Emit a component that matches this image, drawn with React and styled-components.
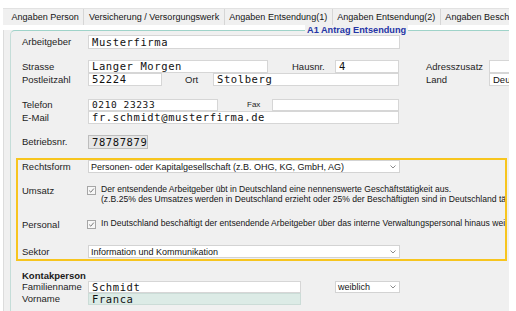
import styled, { createGlobalStyle } from "styled-components";

const GlobalStyle = createGlobalStyle`
  html, body {
    margin: 0;
    padding: 0;
    background: #ffffff;
    overflow: hidden;
  }
  * {
    box-sizing: border-box;
  }
`;

const tabs = [
  "Angaben Person",
  "Versicherung / Versorgungswerk",
  "Angaben Entsendung(1)",
  "Angaben Entsendung(2)",
  "Angaben Beschäftigung",
];

function Chevron() {
  return (
    <svg width="6" height="4" viewBox="0 0 6 4">
      <path d="M0.5 0.5 L3 3 L5.5 0.5" fill="none" stroke="#8a8a8a" strokeWidth="1" />
    </svg>
  );
}

function Check() {
  return (
    <CheckBox>
      <svg width="7" height="7" viewBox="0 0 7 7">
        <path d="M1.2 3.6 L2.8 5.2 L5.8 1.6" fill="none" stroke="#7a7a7a" strokeWidth="1" />
      </svg>
    </CheckBox>
  );
}

function App() {
  return (
    <Window>
      <GlobalStyle />
      <TabBar>
        {tabs.map((t) => (
          <Tab key={t}>{t}</Tab>
        ))}
      </TabBar>
      <Panel>
        <Group>
          <GroupTitle>A1 Antrag Entsendung</GroupTitle>

          <Row $h={14}>
            <Label>Arbeitgeber</Label>
            <Field $w={312} $h={14}>Musterfirma</Field>
          </Row>

          <Row $h={13} $mt={11}>
            <Label>Strasse</Label>
            <Field $w={180} $h={13}>Langer Morgen</Field>
            <Label $w={43} $ml={24}>Hausnr.</Label>
            <Field $w={64} $h={13}>4</Field>
            <Label $w={63} $ml={27}>Adresszusatz</Label>
            <Field $w={60} $h={13}></Field>
          </Row>
          <Row $h={13}>
            <Label>Postleitzahl</Label>
            <Field $w={74} $h={13}>52224</Field>
            <Label $w={28} $ml={23}>Ort</Label>
            <Field $w={186} $h={13}>Stolberg</Field>
            <Label $w={63} $ml={27}>Land</Label>
            <Field $w={60} $h={13} $plain>Deutschland</Field>
          </Row>

          <Row $h={12} $mt={13}>
            <Label>Telefon</Label>
            <Field $w={130} $h={12} $small>0210 23233</Field>
            <Label $w={25} $ml={29} $small>Fax</Label>
            <Field $w={127} $h={12}></Field>
          </Row>
          <Row $h={13}>
            <Label>E-Mail</Label>
            <Field $w={311} $h={13}>fr.schmidt@musterfirma.de</Field>
          </Row>

          <Row $h={14} $mt={11}>
            <Label>Betriebsnr.</Label>
            <Field $w={60} $h={14} $disabled>78787879</Field>
          </Row>

          <Highlight>
            <Row $h={13}>
              <Label>Rechtsform</Label>
              <Select $w={312} $h={13}>
                <span>Personen- oder Kapitalgesellschaft (z.B. OHG, KG, GmbH, AG)</span>
                <Chevron />
              </Select>
            </Row>

            <CheckRow $mt={12}>
              <Label>Umsatz</Label>
              <Check />
              <CheckText>
                Der entsendende Arbeitgeber übt in Deutschland eine nennenswerte Geschäftstätigkeit aus.
                <br />
                (z.B.25% des Umsatzes werden in Deutschland erzieht oder 25% der Beschäftigten sind in Deutschland tätig)
              </CheckText>
            </CheckRow>

            <CheckRow $mt={15}>
              <Label>Personal</Label>
              <Check />
              <CheckText>
                In Deutschland beschäftigt der entsendende Arbeitgeber über das interne Verwaltungspersonal hinaus weitere Mitarbeiter
              </CheckText>
            </CheckRow>

            <Row $h={13} $mt={14}>
              <Label>Sektor</Label>
              <Select $w={312} $h={13}>
                <span>Information und Kommunikation</span>
                <Chevron />
              </Select>
            </Row>
          </Highlight>

          <SectionTitle>Kontakperson</SectionTitle>
          <Row $h={12}>
            <Label>Familienname</Label>
            <Field $w={213} $h={12}>Schmidt</Field>
            <Select $w={65} $h={12} $ml={34}>
              <span>weiblich</span>
              <Chevron />
            </Select>
          </Row>
          <Row $h={12}>
            <Label>Vorname</Label>
            <Field $w={213} $h={12} $tint>Franca</Field>
          </Row>
        </Group>
      </Panel>
    </Window>
  );
}

const Window = styled.div`
  width: 509px;
  height: 311px;
  overflow: hidden;
  padding-top: 8px;
  font-family: "Liberation Sans", Arial, sans-serif;
  color: #1b1b1b;
`;

const TabBar = styled.div`
  display: flex;
  height: 17px;
  margin-left: 3px;
  padding-left: 4px;
  background: #f0f0f0;
  border-top: 1px solid #e2e2e2;
  white-space: nowrap;
`;

const Tab = styled.div`
  flex: none;
  padding: 0 4.5px;
  font-size: 9.05px;
  line-height: 16px;
  color: #151515;
  border-right: 1px solid #d6d6d6;
  &:last-child {
    border-right: none;
  }
`;

const Panel = styled.div`
  margin-left: 3px;
  margin-top: 2px;
  height: 300px;
  background: #f0f0f0;
  border-left: 1px solid #dcdcdc;
  padding-left: 6px;
`;

const Group = styled.div`
  margin-top: 5px;
  border-top: 1px solid #9fd3c9;
  border-left: 1px solid #c4ddd8;
  border-top-left-radius: 5px;
  padding-left: 6px;
  width: 560px;
  height: 290px;
`;

const GroupTitle = styled.div`
  width: max-content;
  height: 10px;
  margin-top: -6px;
  margin-left: 288px;
  padding: 0 2px;
  background: #f0f0f0;
  font-size: 9.2px;
  font-weight: bold;
  line-height: 10px;
  color: #2535a6;
`;

const Row = styled.div`
  display: flex;
  align-items: center;
  height: ${(p) => p.$h}px;
  margin-top: ${(p) => p.$mt || 0}px;
  padding-left: 5px;
  white-space: nowrap;
`;

const Label = styled.div`
  flex: none;
  width: ${(p) => p.$w || 66}px;
  margin-left: ${(p) => p.$ml || 0}px;
  font-size: ${(p) => (p.$small ? 8 : 9.5)}px;
  line-height: 12px;
  color: #1d1d1d;
`;

const Field = styled.div`
  flex: none;
  width: ${(p) => p.$w}px;
  height: ${(p) => p.$h}px;
  padding-left: 3px;
  border: 1px solid ${(p) => (p.$disabled ? "#bdbdbd" : p.$tint ? "#cbdcd7" : "#d6d6d6")};
  background: ${(p) => (p.$disabled ? "#e6e6e6" : p.$tint ? "#dcebe6" : "#ffffff")};
  font-family: ${(p) =>
    p.$plain ? '"Liberation Sans", Arial, sans-serif' : '"DejaVu Sans Mono", "Liberation Mono", monospace'};
  font-size: ${(p) => (p.$plain ? 9.5 : p.$small ? 9.5 : 10.5)}px;
  letter-spacing: ${(p) => (p.$plain ? 0 : 0.6)}px;
  line-height: ${(p) => p.$h - 2}px;
  color: #111;
  overflow: hidden;
`;

const Select = styled.div`
  flex: none;
  display: flex;
  align-items: center;
  justify-content: space-between;
  width: ${(p) => p.$w}px;
  height: ${(p) => p.$h}px;
  margin-left: ${(p) => p.$ml || 0}px;
  padding: 0 3px 0 2px;
  border: 1px solid #d3d3d3;
  background: #ffffff;
  font-size: 9px;
  color: #141414;
  overflow: hidden;
`;

const Highlight = styled.div`
  margin-top: 9px;
  margin-left: -1px;
  width: 491px;
  border: 2px solid #f7c51e;
  padding-bottom: 1px;
  overflow: hidden;
  & > div {
    padding-left: 4px;
  }
`;

const CheckRow = styled.div`
  display: flex;
  align-items: flex-start;
  margin-top: ${(p) => p.$mt || 0}px;
  white-space: nowrap;
`;

const CheckBox = styled.span`
  flex: none;
  display: flex;
  width: 7px;
  height: 7px;
  margin-top: 2px;
  margin-right: 6px;
  outline: 1px solid #a6a6a6;
  background: #f7f7f7;
  align-items: center;
  justify-content: center;
  & svg {
    display: block;
  }
`;

const CheckText = styled.div`
  font-size: 8.6px;
  line-height: 9.5px;
  color: #151515;
`;

const SectionTitle = styled.div`
  margin-top: 9px;
  padding-left: 5px;
  font-size: 9.5px;
  font-weight: bold;
  line-height: 11px;
  color: #1a1a1a;
`;

export default App;
